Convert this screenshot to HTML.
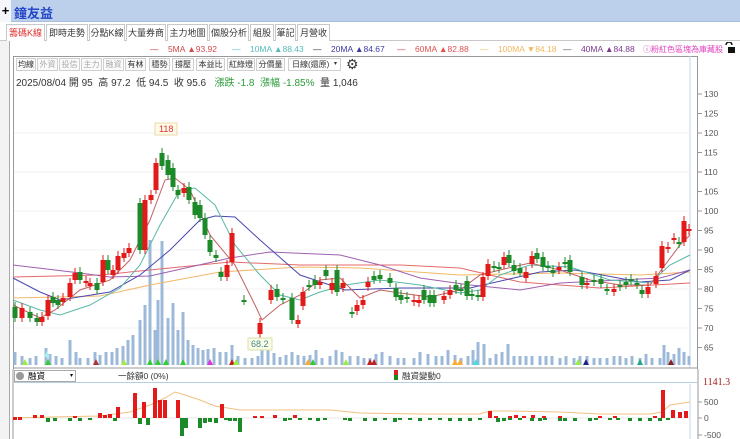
<!DOCTYPE html>
<html><head><meta charset="utf-8">
<style>
*{margin:0;padding:0;box-sizing:border-box}
body{width:740px;height:439px;overflow:hidden;background:#fff;font-family:"Liberation Sans","Noto Sans CJK TC",sans-serif;position:relative}
.abs{position:absolute}
#title{left:0;top:0;width:740px;height:22px;background:#bcd0ec;border-bottom:1px solid #a9bedd}
#plus{left:0;top:0;width:11px;height:22px;background:#f4f6fa;font-size:13px;font-weight:bold;line-height:22px;text-align:center}
#name{left:14px;top:3px;font-size:13px;font-weight:bold;color:#2446c8}
.tab{position:absolute;top:24px;height:17px;border:1px solid #c8c8c8;border-bottom:none;font-size:9px;line-height:16px;text-align:center;color:#333;background:#fff;white-space:nowrap;overflow:hidden}
.tb{position:absolute;top:58px;height:13px;border:1px solid #cfcfcf;font-size:8px;line-height:11px;text-align:center;color:#333;background:#fafafa;white-space:nowrap;overflow:hidden}
.lg{position:absolute;top:44px;font-size:8.5px;white-space:nowrap}
</style></head><body>
<div id="title" class="abs"></div>
<div id="plus" class="abs">+</div>
<div id="name" class="abs">鐘友益</div>
<div class="abs" style="left:0;top:22px;width:740px;height:19px;border-bottom:1px solid #c8c8c8"></div>
<div class="tab" style="left:6px;width:39px;color:#e03030">籌碼K線</div>
<div class="tab" style="left:46px;width:42px">即時走勢</div>
<div class="tab" style="left:89px;width:36px">分點K線</div>
<div class="tab" style="left:126px;width:40px">大量券商</div>
<div class="tab" style="left:167px;width:41px">主力地圖</div>
<div class="tab" style="left:209px;width:40px">個股分析</div>
<div class="tab" style="left:250px;width:24px">組股</div>
<div class="tab" style="left:275px;width:21px">筆記</div>
<div class="tab" style="left:297px;width:33px">月營收</div>

<div class="lg" style="left:150px;color:#c33">—&nbsp;&nbsp;&nbsp; <span style="color:#d24a4a">5MA ▲93.92</span></div>
<div class="lg" style="left:232px;color:#5bb">—&nbsp;&nbsp;&nbsp; <span>10MA ▲88.43</span></div>
<div class="lg" style="left:313px;color:#333">—&nbsp;&nbsp;&nbsp; <span style="color:#3a3aa0">20MA ▲84.67</span></div>
<div class="lg" style="left:397px;color:#e03a3a">—&nbsp;&nbsp;&nbsp; <span style="color:#e05050">60MA ▲82.88</span></div>
<div class="lg" style="left:480px;color:#f0b860">—&nbsp;&nbsp;&nbsp; <span>100MA ▼84.18</span></div>
<div class="lg" style="left:563px;color:#555">—&nbsp;&nbsp;&nbsp; <span style="color:#7a3a8a">40MA ▲84.88</span></div>
<div class="lg" style="left:643px;color:#e040c0;font-size:8px">ⓘ粉紅色區塊為庫藏股</div>
<svg class="abs" style="left:724px;top:42px" width="12" height="12"><path d="M2 3 A3 3 0 0 1 8 3" fill="none" stroke="#111" stroke-width="1.5"/><rect x="4" y="5" width="7" height="6" fill="#111"/></svg>

<div class="abs" style="left:0;top:41px;width:10px;height:398px;border-right:1px solid #aaa;background:#f3f3f3"></div>
<div class="abs" style="left:13px;top:56px;width:685px;height:313px;border:1px solid #999;border-bottom:none"></div>

<div class="tb" style="left:16px;width:20px">均線</div>
<div class="tb" style="left:37px;width:21px;color:#aaa">外資</div>
<div class="tb" style="left:59px;width:21px;color:#aaa">投信</div>
<div class="tb" style="left:81px;width:21px;color:#aaa">主力</div>
<div class="tb" style="left:103px;width:21px;color:#aaa">融資</div>
<div class="tb" style="left:125px;width:21px">有林</div>
<div class="tb" style="left:149px;width:21px">穩勢</div>
<div class="tb" style="left:172px;width:22px">撐壓</div>
<div class="tb" style="left:196px;width:29px">本益比</div>
<div class="tb" style="left:227px;width:28px">紅綠燈</div>
<div class="tb" style="left:256px;width:29px">分價量</div>
<div class="tb" style="left:288px;width:53px;background:#fff;text-align:left;padding-left:3px">日線(還原)<span style="position:absolute;right:3px;font-size:6px">▾</span></div>
<div class="abs" style="left:346px;top:56px;font-size:14px;color:#333">⚙</div>
<div class="abs" style="left:16px;top:74px;font-size:10px;color:#333;white-space:nowrap">2025/08/04 開 95&nbsp; 高 97.2&nbsp; 低 94.5&nbsp; 收 95.6&nbsp;&nbsp; <span style="color:#2a9a3a">漲跌 -1.8&nbsp; 漲幅 -1.85%</span>&nbsp; 量 1,046</div>

<svg class="abs" style="left:0;top:0" width="740" height="439" id="sv"></svg>

<div class="abs" style="left:13px;top:369px;width:685px;height:14px;border-bottom:1px solid #b8cbe6"></div>
<div class="abs" style="left:14px;top:370px;width:62px;height:12px;border:1px solid #aaa;font-size:8.5px;line-height:10px;padding-left:13px">融資<span style="position:absolute;right:2px;font-size:6px">▾</span></div>
<div class="abs" style="left:16px;top:372px;width:8px;height:8px;border-radius:50%;background:#999"></div>
<div class="abs" style="left:118px;top:370px;font-size:8.5px;color:#333">一餘額0 (0%)</div>
<div class="abs" style="left:394px;top:370px;width:4px;height:10px;background:linear-gradient(#d22 50%,#1a8a1a 50%)"></div>
<div class="abs" style="left:402px;top:370px;font-size:8.5px;color:#333">融資變動0</div>
<div class="abs" style="left:703px;top:377px;font-size:10px;color:#a02020;font-family:'Liberation Serif',serif">1141.3</div>

<script>
var s=document.getElementById('sv'),h='';
function L(x1,y1,x2,y2,c,w){h+='<line x1="'+x1+'" y1="'+y1+'" x2="'+x2+'" y2="'+y2+'" stroke="'+c+'" stroke-width="'+(w||1)+'"/>';}
function R(x,y,w,hh,c){h+='<rect x="'+x+'" y="'+y+'" width="'+w+'" height="'+hh+'" fill="'+c+'"/>';}
function T(x,y,t,c,sz){h+='<text x="'+x+'" y="'+y+'" font-size="'+(sz||9)+'" fill="'+(c||'#444')+'" font-family="Liberation Sans">'+t+'</text>';}
L(690,56,690,368,'#c8d4e8');
for(var p=130;p>=65;p-=5){var y=133+(120-p)*3.9;if(p%10==0&&p<=125)L(14,y,690,y,'#f0f0f0');L(698,y,702,y,'#999');T(704,y+3,p,'#555',8.5);}
L(13,368,698,368,'#999');
var vol=[[15,352],[22,356],[30,358],[36,356],[46,348],[50,354],[56,356],[62,358],[70,340],[76,352],[80,358],[88,358],[95,352],[100,355],[106,352],[112,352],[117,348],[123,346],[128,340],[133,335],[140,320],[145,305],[150,240],[155,330],[158,300],[162,241],[168,318],[173,303],[178,330],[183,312],[188,340],[193,345],[198,348],[203,350],[208,349],[214,348],[220,352],[226,352],[232,345],[238,356],[245,358],[252,358],[258,356],[262,350],[268,350],[274,353],[280,357],[286,355],[292,352],[298,355],[304,356],[310,355],[316,350],[322,358],[330,356],[336,350],[342,352],[350,356],[358,356],[364,358],[370,358],[376,354],[382,352],[390,356],[398,358],[404,358],[414,358],[420,352],[428,354],[436,356],[442,356],[448,350],[455,355],[461,358],[468,356],[473,350],[478,342],[484,344],[490,358],[496,354],[502,352],[508,344],[514,356],[520,356],[526,356],[532,356],[540,356],[546,356],[552,356],[560,358],[566,356],[574,358],[580,356],[587,356],[594,358],[600,358],[607,358],[614,356],[620,356],[626,358],[632,356],[640,358],[646,354],[652,358],[660,358],[664,345],[668,352],[674,354],[679,348],[684,352],[689,356]];
vol.forEach(function(v){R(v[0]-1.5,v[1],3,365-v[1],'#9cb9da');});
var tri=[[25,'#9e4'],[48,'#3c3'],[96,'#a33'],[124,'#9e4'],[150,'#3c3'],[158,'#3c3'],[166,'#3c3'],[183,'#3c3'],[210,'#d3d'],[232,'#b22'],[236,'#9e4'],[308,'#fa3'],[313,'#3c3'],[346,'#9e4'],[370,'#b22'],[374,'#b22'],[455,'#fa3'],[460,'#fa3'],[476,'#4dd'],[578,'#9e4'],[586,'#228'],[640,'#2a8'],[671,'#822']];
tri.forEach(function(t){h+='<polygon points="'+(t[0]-3)+',365 '+(t[0]+3)+',365 '+t[0]+',359" fill="'+t[1]+'"/>';});
h+='<polygon points="44,357 50,357 47,351" fill="#aee"/>';
function P(pts,c){h+='<polyline fill="none" stroke="'+c+'" stroke-width="1" points="'+pts+'"/>';}
P('13,277 100,275 150,270 230,262 300,265 400,265 460,268 520,282 600,288 690,283','#e46a6a');
P('13,298 100,296 150,285 220,272 300,267 360,268 460,275 560,273 640,275 690,272','#f2b868');
P('13,265 80,273 110,277 150,276 230,258 270,252 340,255 380,265 420,278 470,285 520,290 560,283 620,280 660,278 690,270','#a060b0');
P('13,278 40,292 60,300 110,292 140,275 170,250 200,220 215,216 235,217 260,240 300,275 345,290 400,288 470,288 540,272 575,270 640,282 670,280 690,270','#4848b0');
P('13,300 40,310 60,315 90,305 120,288 140,265 160,225 180,190 195,188 215,205 235,245 260,275 280,295 300,300 320,292 345,285 380,280 420,285 460,293 480,290 500,275 530,265 570,267 610,280 650,283 670,265 690,255','#5ab8a8');
P('13,305 40,318 55,310 80,290 110,280 130,260 150,220 165,180 175,178 190,190 210,235 235,265 255,305 262,320 280,305 300,295 320,280 340,278 360,298 380,290 400,293 430,297 460,290 480,275 500,270 530,263 560,270 590,280 620,285 650,285 665,265 680,245 690,235','#c06060');
var G='#1d8a2a',Rd='#e21a1a';
var c=[[15,307,318,G],[22,308,318,Rd],[30,312,318,G],[37,318,322,G],[42,317,322,Rd],[48,300,316,Rd],[53,297,303,G],[58,300,305,G],[63,298,302,Rd],[70,283,297,Rd],[75,273,280,Rd],[80,272,280,G],[86,281,283,Rd],[90,283,286,Rd],[97,283,290,G],[103,260,282,Rd],[108,260,270,G],[113,270,275,Rd],[118,256,270,Rd],[124,253,258,Rd],[129,248,253,Rd],[140,203,250,G],[145,200,250,Rd],[151,195,200,Rd],[156,163,190,Rd],[162,153,166,G],[168,160,175,G],[173,168,187,G],[178,190,195,G],[184,188,193,Rd],[189,187,200,G],[195,202,215,G],[200,205,218,G],[205,218,235,G],[210,240,252,G],[216,255,258,G],[221,272,277,G],[227,265,277,Rd],[232,233,262,Rd],[244,300,301,G],[260,323,334,Rd],[271,290,300,Rd],[277,289,297,G],[283,298,300,G],[292,298,320,G],[298,320,324,Rd],[303,292,306,Rd],[309,285,287,G],[315,280,285,G],[320,282,285,Rd],[326,270,276,G],[332,283,290,Rd],[337,270,292,G],[343,283,288,Rd],[352,312,314,G],[357,305,311,Rd],[363,300,305,Rd],[368,282,287,Rd],[374,276,280,G],[380,275,279,G],[390,278,283,G],[396,288,297,G],[401,295,300,G],[407,297,299,G],[414,300,302,Rd],[419,300,303,Rd],[424,290,300,G],[430,295,303,G],[434,295,303,G],[444,296,300,Rd],[450,290,295,Rd],[456,285,290,G],[461,289,291,G],[467,281,296,G],[472,294,296,G],[478,295,297,G],[483,277,297,Rd],[488,264,276,Rd],[494,266,268,G],[499,267,269,G],[504,257,265,Rd],[509,255,263,G],[514,265,271,G],[520,268,273,G],[526,272,278,Rd],[532,256,264,Rd],[537,253,259,G],[543,257,267,G],[548,266,268,G],[553,270,273,G],[559,267,270,Rd],[565,262,264,G],[570,260,272,G],[582,277,285,G],[587,283,285,Rd],[594,280,282,G],[601,279,284,G],[607,289,291,G],[614,289,292,Rd],[620,285,287,G],[626,282,285,G],[631,279,281,G],[637,283,285,G],[642,290,294,G],[648,287,294,Rd],[656,276,284,Rd],[662,246,268,Rd],[668,247,249,Rd],[674,238,240,Rd],[679,242,244,G],[684,221,242,Rd],[689,229,231,Rd]];
c.forEach(function(k){L(k[0],k[1]-5,k[0],k[2]+4,k[3]);R(k[0]-2.5,k[1],5,Math.max(2,k[2]-k[1]),k[3]);});
R(155,123,22,12,'#fffbe8');h+='<rect x="155" y="123" width="22" height="12" fill="none" stroke="#e8d8a8"/>';T(159,132,'118','#d33',9);
R(248,338,24,12,'#fbfde8');h+='<rect x="248" y="338" width="24" height="12" fill="none" stroke="#d8e0a8"/>';T(251,347,'68.2','#488',9);
L(13,369,13,439,'#999');L(698,369,698,439,'#999');L(690,384,690,439,'#c8d4e8');
L(14,418,690,418,'#e8e8e8');
[[500,402],[0,418],[-500,435]].forEach(function(a){L(698,a[1],702,a[1],'#999');T(704,a[1]+3,a[0],'#555',8.5);});
P('13,418 50,417 100,416 130,412 150,405 165,398 175,392 185,395 200,400 215,406 240,410 300,410 330,410 360,413 420,414 480,414 490,411 510,411 560,412 600,414 650,414 662,412 670,405 690,402','#f0c080');
var b=[[15,417,420],[20,417,420],[35,415,418],[42,415,418],[48,418,422],[55,418,421],[70,418,421],[75,416,418],[80,418,421],[90,418,420],[100,413,418],[105,415,418],[110,414,418],[115,418,421],[118,407,418],[135,393,418],[140,418,424],[144,402,418],[148,418,425],[155,388,418],[160,400,418],[165,400,418],[178,400,418],[182,418,436],[186,418,428],[200,418,428],[205,418,423],[210,418,422],[216,418,423],[222,404,418],[226,418,420],[230,418,421],[235,418,421],[240,418,432],[255,416,418],[262,416,418],[275,415,418],[285,418,421],[290,418,420],[295,415,418],[300,418,420],[310,418,420],[318,418,421],[325,418,420],[345,418,420],[350,418,421],[365,418,421],[375,418,421],[385,418,420],[395,418,422],[400,418,420],[410,418,420],[420,418,421],[430,418,420],[440,418,420],[450,418,421],[460,418,421],[470,418,421],[480,418,420],[498,418,422],[504,418,421],[510,418,420],[520,418,420],[532,418,421],[540,418,421],[545,418,420],[560,418,421],[565,418,421],[575,418,421],[590,418,421],[596,418,420],[610,418,420],[618,418,420],[630,418,421],[640,418,421],[650,418,421],[660,418,421],[663,390,418],[668,418,420],[673,410,418],[680,412,418],[686,411,418],[490,411,418],[496,416,418],[510,416,418],[516,415,418],[524,416,418],[533,415,418],[544,416,418],[560,416,418],[600,416,418],[615,416,418],[655,416,418]];
b.forEach(function(k){var col=k[1]<418?'#e41a1a':'#1d8a2a';R(k[0]-2,k[1],4,k[2]-k[1],col);});
s.innerHTML=h;
</script>
</body></html>
